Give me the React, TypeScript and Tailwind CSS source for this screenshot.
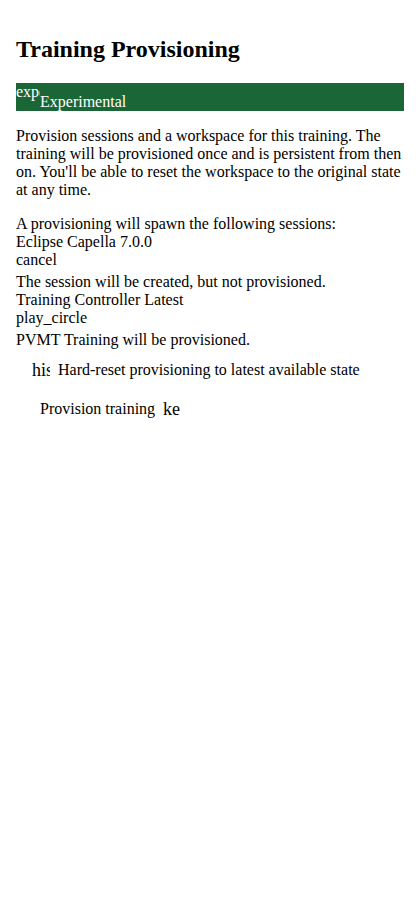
export default function App() {
  return (
    <div className="min-h-screen bg-white px-4 pt-4 text-base text-black font-['Liberation_Serif',serif]">
      {/* Header */}
      <h2 className="mt-5 mb-5 text-2xl font-bold leading-[27px]">Training Provisioning</h2>

      {/* Experimental badge */}
      <div className="flex h-7 bg-[#1b6637] text-white">
        <span className="w-6 overflow-hidden whitespace-nowrap leading-[18px]">experiment</span>
        <span className="self-end leading-[18px]">Experimental</span>
      </div>

      {/* Description */}
      <p className="mt-4 leading-[18px]">
        Provision sessions and a workspace for this training. The training will be provisioned once
        and is persistent from then on. You'll be able to reset the workspace to the original state
        at any time.
      </p>

      <div className="mt-4 leading-[18px]">
        <div>A provisioning will spawn the following sessions:</div>

        <div>Eclipse Capella 7.0.0</div>
        <div>cancel</div>
        <div className="mt-1">The session will be created, but not provisioned.</div>

        <div>Training Controller Latest</div>
        <div>play_circle</div>
        <div className="mt-1">PVMT Training will be provisioned.</div>
      </div>

      {/* Reset option */}
      <div className="mt-[11px] flex items-center gap-2 pl-4">
        <span className="w-[18px] overflow-hidden whitespace-nowrap text-lg leading-5">history</span>
        <span className="leading-[18px]">Hard-reset provisioning to latest available state</span>
      </div>

      {/* Action */}
      <button className="mt-4 ml-4 flex items-center gap-2 px-2 py-[3px] font-['Liberation_Serif',serif]">
        <span className="leading-[18px]">Provision training</span>
        <span className="w-[17px] overflow-hidden whitespace-nowrap text-lg leading-5">keyboard_arrow_right</span>
      </button>
    </div>
  );
}
